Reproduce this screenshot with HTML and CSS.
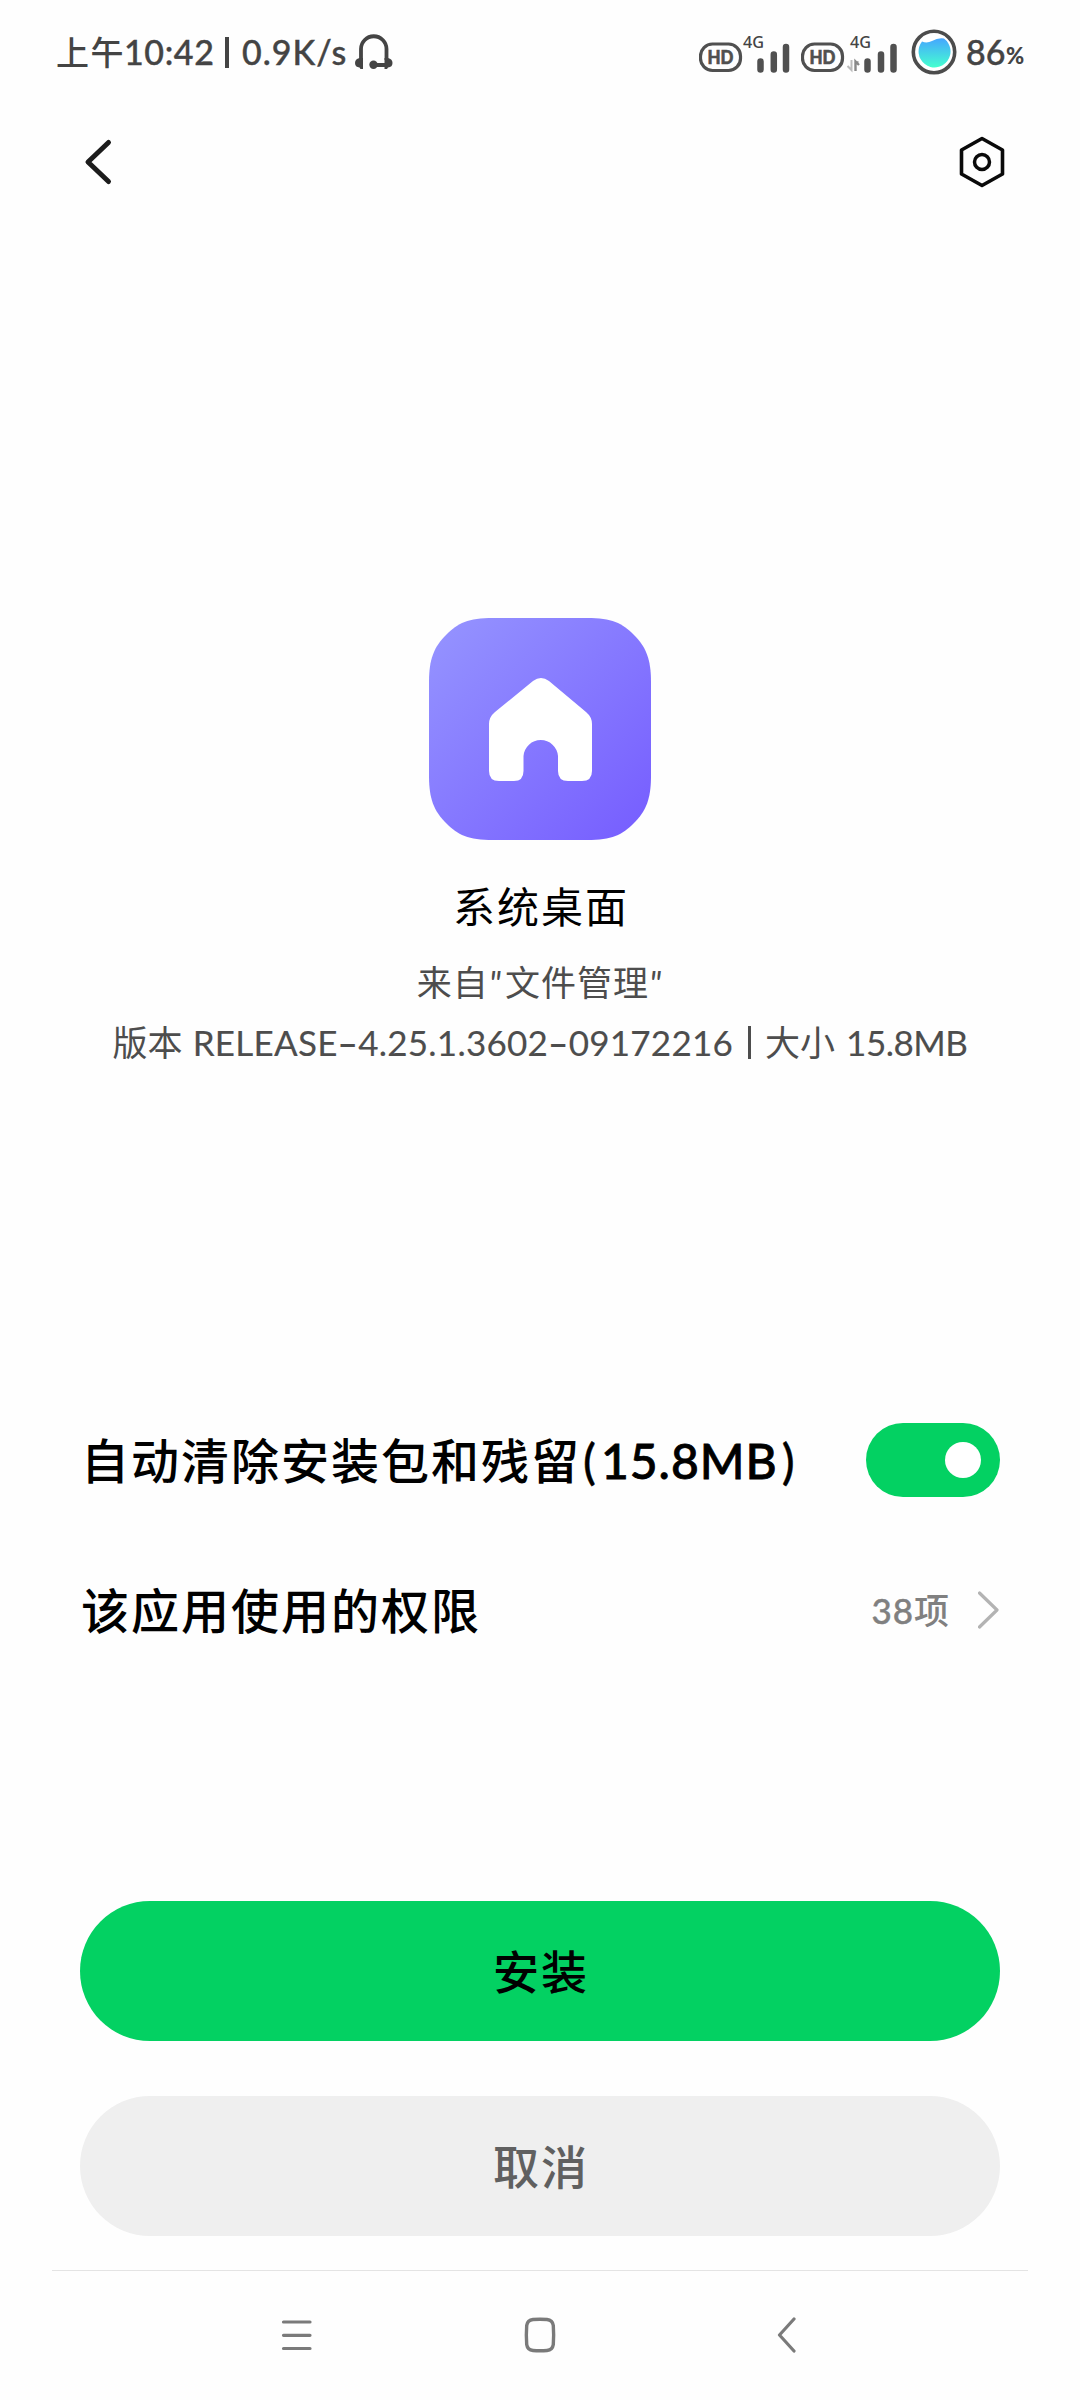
FILE: index.html
```html
<!DOCTYPE html>
<html lang="zh-CN">
<head>
  <meta charset="UTF-8" />
  <meta name="viewport" content="width=device-width, initial-scale=1.0"/>
  <title>系统桌面</title>
  <link rel="stylesheet" href="styles.css">
</head>
<body>
  <div class="screen">

    <!-- Status bar -->
    <div class="status-bar">
      <div class="status-left">
        <span class="status-cjk">上午</span><span class="status-time">10:42</span><span class="status-sep"></span><span class="status-speed">0.9K/s</span>
        <svg class="headphones" width="38" height="36" viewBox="0 0 38 36">
          <path d="M6 26V15a12.7 12.7 0 0 1 25.500 0V26M31 31H19" fill="none" stroke="#444" stroke-width="3.800"/>
          <path d="M8 24v11h-2.500l-1-1.500Q0 33 0 29t4.500-5zM29.500 24v11h2.500l1-1.500q4.500-.5 4.500-4.500t-4.500-5z" fill="#444"/>
          <circle cx="18.500" cy="30.800" r="4.200" fill="#444"/>
        </svg>
      </div>
      <div class="status-right">
        <svg class="signal" width="92" height="46" viewBox="0 0 92 46">
          <rect x="1.500" y="15" width="40" height="26.500" rx="12" fill="none" stroke="#505050" stroke-width="3.200"/>
          <text x="21.500" y="34.800" class="hd" textLength="26" lengthAdjust="spacingAndGlyphs">HD</text>
          <text x="44" y="18.500" class="net" textLength="21" lengthAdjust="spacingAndGlyphs">4G</text>
          <path d="M61.500 32.500v8M74.800 25.500v15M87 18v22.500" stroke="#505050" stroke-width="6.500" stroke-linecap="round"/>
        </svg>
        <svg class="signal second" width="98" height="46" viewBox="0 0 98 46">
          <rect x="1.500" y="15" width="40" height="26.500" rx="12" fill="none" stroke="#505050" stroke-width="3.200"/>
          <text x="21.500" y="34.800" class="hd" textLength="26" lengthAdjust="spacingAndGlyphs">HD</text>
          <text x="49" y="18.500" class="net" textLength="21" lengthAdjust="spacingAndGlyphs">4G</text>
          <path d="M50.500 31v10l-4-4" fill="none" stroke="#bbb" stroke-width="2"/>
          <path d="M58 42V32.500l-3.500 3.500M58 33.500h-3" fill="none" stroke="#888" stroke-width="2.400" transform="matrix(-1 0 0 1 112.500 0)"/>
          <path d="M66.500 32.500v8M80 25.500v15M92.500 18v22.500" stroke="#505050" stroke-width="6.500" stroke-linecap="round"/>
        </svg>
        <svg class="battery" width="46" height="46" viewBox="0 0 46 46">
          <defs>
            <linearGradient id="water" x1="0" y1="0" x2="0" y2="1">
              <stop offset="0" stop-color="#45a6ff"/>
              <stop offset="1" stop-color="#45ffd0"/>
            </linearGradient>
          </defs>
          <circle cx="23" cy="23" r="20.700" fill="#fff" stroke="#4c4c4c" stroke-width="3.600"/>
          <path d="M11 12.500q5 2 10-.5 6-3.500 12-2.500A16 16 0 1 1 11 12.500z" fill="url(#water)"/>
        </svg>
        <span class="percent">86</span><span class="percent-sign">%</span>
      </div>
    </div>

    <!-- Title bar -->
    <div class="title-bar">
      <svg width="30" height="52" viewBox="0 0 30 52">
        <path d="M24.500 6.500L4 26 24.500 45.500" fill="none" stroke="#1c1c1c" stroke-width="5" stroke-linecap="round" stroke-linejoin="round"/>
      </svg>
      <svg width="46" height="52" viewBox="0 0 46 52">
        <path d="M23 2.500L43.500 14v24L23 49.500 2.500 38V14z" fill="none" stroke="#0a0a0a" stroke-width="3.600" stroke-linejoin="round"/>
        <circle cx="23" cy="26" r="7.500" fill="none" stroke="#0a0a0a" stroke-width="3.500"/>
      </svg>
    </div>

    <!-- App info -->
    <div class="app-info">
      <svg class="app-icon" width="222" height="222" viewBox="0 0 222 222">
        <defs>
          <linearGradient id="purple" x1="0.050" y1="0.050" x2="0.950" y2="0.950">
            <stop offset="0" stop-color="#9492ff"/>
            <stop offset="1" stop-color="#775fff"/>
          </linearGradient>
        </defs>
        <path d="M64 0H158C183 0 193 5 205 17S222 41 222 64V158C222 181 217 193 205 205S183 222 158 222H64C39 222 29 217 17 205S0 181 0 158V64C0 41 5 29 17 17S39 0 64 0z" fill="url(#purple)"/>
        <path d="M104 63q8-6 16 0l37 31q6 5 6 12v47q0 10-10 10h-14q-10 0-10-10v-15a17.300 17.300 0 0 0-34.500 0v15q0 10-9.500 10h-15q-10 0-10-10v-47q0-7 6-12z" fill="#fff"/>
      </svg>
      <div class="app-name">系统桌面</div>
      <div class="app-source">来自<i>"</i>文件管理<i>"</i></div>
      <div class="app-version">版本 <span class="release">RELEASE<b>–</b>4.25.1.3602<b>–</b>09172216</span><span class="bar"></span>大小 <span class="size">15.8MB</span></div>
    </div>

    <!-- Settings -->
    <div class="row">
      <div class="row-label">自动清除安装包和残留<span class="row-size"><span class="paren">(</span>15.8MB<span class="paren end">)</span></span></div>
      <div class="toggle"><div class="knob"></div></div>
    </div>
    <div class="row">
      <div class="row-label">该应用使用的权限</div>
      <div class="row-value">
        <span><span class="count">38</span>项</span>
        <svg width="22" height="40" viewBox="0 0 22 40">
          <path d="M1.500 3l17.500 17L1.500 37" fill="none" stroke="#b3b3b3" stroke-width="3.200" stroke-linecap="round" stroke-linejoin="round"/>
        </svg>
      </div>
    </div>

    <!-- Buttons -->
    <div class="actions">
      <button class="btn install">安装</button>
      <button class="btn cancel">取消</button>
    </div>

    <!-- Navigation bar -->
    <div class="nav-bar">
      <svg width="32" height="32" viewBox="0 0 32 32">
        <path d="M2.500 3h26.500M2.500 16.300h26.500M2.500 29.500h26.500" stroke="#7a7a7a" stroke-width="3.200" stroke-linecap="round"/>
      </svg>
      <svg class="nav-home" width="32" height="36" viewBox="0 0 32 36">
        <path d="M9 2.500Q16 1.900 23 2.500Q28.500 3 29.300 8.500Q30 18 29.300 27.500Q28.500 33 23 33.500Q16 34.100 9 33.500Q3.500 33 2.700 27.500Q2 18 2.700 8.500Q3.500 3 9 2.500z" fill="none" stroke="#7a7a7a" stroke-width="3.400"/>
      </svg>
      <svg width="20" height="36" viewBox="0 0 20 36">
        <path d="M17 2L2.500 18 17 34" fill="none" stroke="#7a7a7a" stroke-width="3.200" stroke-linecap="round" stroke-linejoin="round"/>
      </svg>
    </div>

  </div>
</body>
</html>
```
FILE: styles.css
```css
* {
  box-sizing: border-box;
}

body {
  margin: 0;
  background: #fefefe;
  font-family: Lato, 'Noto Sans CJK SC', sans-serif;
  color: #000;
}

svg {
  display: block;
  flex: none;
}

.screen {
  width: 1080px;
  height: 2400px;
  overflow: hidden;
  display: flex;
  flex-direction: column;
}

/* Status bar */
.status-bar {
  height: 104px;
  padding: 0 52px 0 56px;
  display: flex;
  justify-content: space-between;
  color: #444;
  font-weight: 500;
}

.status-left,
.status-right {
  display: flex;
  align-items: center;
  height: 104px;
  white-space: nowrap;
  line-height: 1;
}

.status-cjk {
  width: 68px;
  font-size: 33px;
  letter-spacing: 1.500px;
}

.status-time,
.status-speed,
.percent {
  font-size: 34px;
  -webkit-text-stroke: 0.4px #444;
}

.status-time {
  width: 101px;
  letter-spacing: 0.600px;
}

.status-sep {
  width: 4px;
  height: 31px;
  margin: 0 13px 0 0;
  background: #444;
}

.status-speed {
  width: 113px;
  letter-spacing: 1px;
}

.signal {
  margin-right: 10px;
}

.signal.second {
  margin-right: 12px;
}

.hd {
  font: 900 19px Lato, sans-serif;
  fill: #505050;
  stroke: #505050;
  stroke-width: 0.6px;
  text-anchor: middle;
}

.net {
  font: 500 16px 'Noto Sans', sans-serif;
  fill: #444;
}

.battery {
  margin-right: 9px;
}

.percent {
  width: 40px;
}

.percent-sign {
  font-size: 22px;
  font-weight: 900;
  width: 22px;
  padding-top: 7px;
}

/* Title bar */
.title-bar {
  height: 116px;
  padding: 0 75px 0 84px;
  display: flex;
  justify-content: space-between;
  align-items: center;
}

/* App info */
.app-info {
  height: 1165px;
  padding-top: 398px;
  display: flex;
  flex-direction: column;
  align-items: center;
  white-space: nowrap;
}

.app-name {
  margin-top: 37px;
  padding-left: 2px;
  font-size: 42px;
  line-height: 60px;
  letter-spacing: 2px;
}

.app-source,
.app-version {
  font-size: 35px;
  line-height: 60px;
  color: #4d4d4d;
}

.app-source {
  margin-top: 15px;
  padding-left: 2px;
  letter-spacing: 1px;
}

.app-source i {
  letter-spacing: 4px;
}

.app-version {
  display: flex;
  align-items: center;
  gap: 10px;
}

.release,
.size {
  -webkit-text-stroke: 0.15px #4d4d4d;
}

.release {
  letter-spacing: 0.250px;
}

.app-version b {
  font-weight: 700;
}

.bar {
  width: 3px;
  height: 33px;
  margin: 0 4px 0 5px;
  background: #4d4d4d;
}

.size {
  margin-left: 1px;
  letter-spacing: -0.500px;
}

/* Settings rows */
.row {
  height: 150px;
  padding: 0 80px;
  display: flex;
  justify-content: space-between;
  align-items: center;
}

.row-label {
  font-size: 48px;
  font-weight: 500;
  letter-spacing: 2px;
  line-height: 72px;
  padding: 2px 0 0 1px;
  white-space: nowrap;
}

.row-size {
  -webkit-text-stroke: 0.800px #000;
  letter-spacing: 1px;
}

.paren {
  margin: 0 4px 0 2px;
  -webkit-text-stroke: 0.400px #000;
}

.paren.end {
  margin-left: 4px;
}

.toggle {
  width: 134px;
  height: 74px;
  padding: 19px;
  border-radius: 37px;
  background: #03d162;
  display: flex;
  justify-content: flex-end;
}

.knob {
  width: 36px;
  height: 36px;
  border-radius: 50%;
  background: #fff;
}

.row-value {
  display: flex;
  align-items: center;
  gap: 29px;
  font-size: 35px;
  line-height: 50px;
  font-weight: 500;
  color: #808080;
}

.count {
  -webkit-text-stroke: 0.400px #808080;
  letter-spacing: 1px;
}

/* Buttons */
.actions {
  padding: 216px 80px 0;
  display: flex;
  flex-direction: column;
  gap: 55px;
}

.btn {
  height: 140px;
  padding: 0 0 4px 2px;
  border: none;
  border-radius: 70px;
  font: 500 46px Lato, 'Noto Sans CJK SC', sans-serif;
  letter-spacing: 2px;
}

.install {
  background: #03d162;
  color: #000;
}

.cancel {
  background: #efefef;
  color: #606060;
}

/* Navigation bar */
.nav-bar {
  height: 129px;
  margin: 34px 52px 0;
  padding: 0 231px 0 229px;
  border-top: 1px solid #e4e4e4;
  display: flex;
  justify-content: space-between;
  align-items: center;
}

.nav-home {
  margin-right: 11px;
}
```
